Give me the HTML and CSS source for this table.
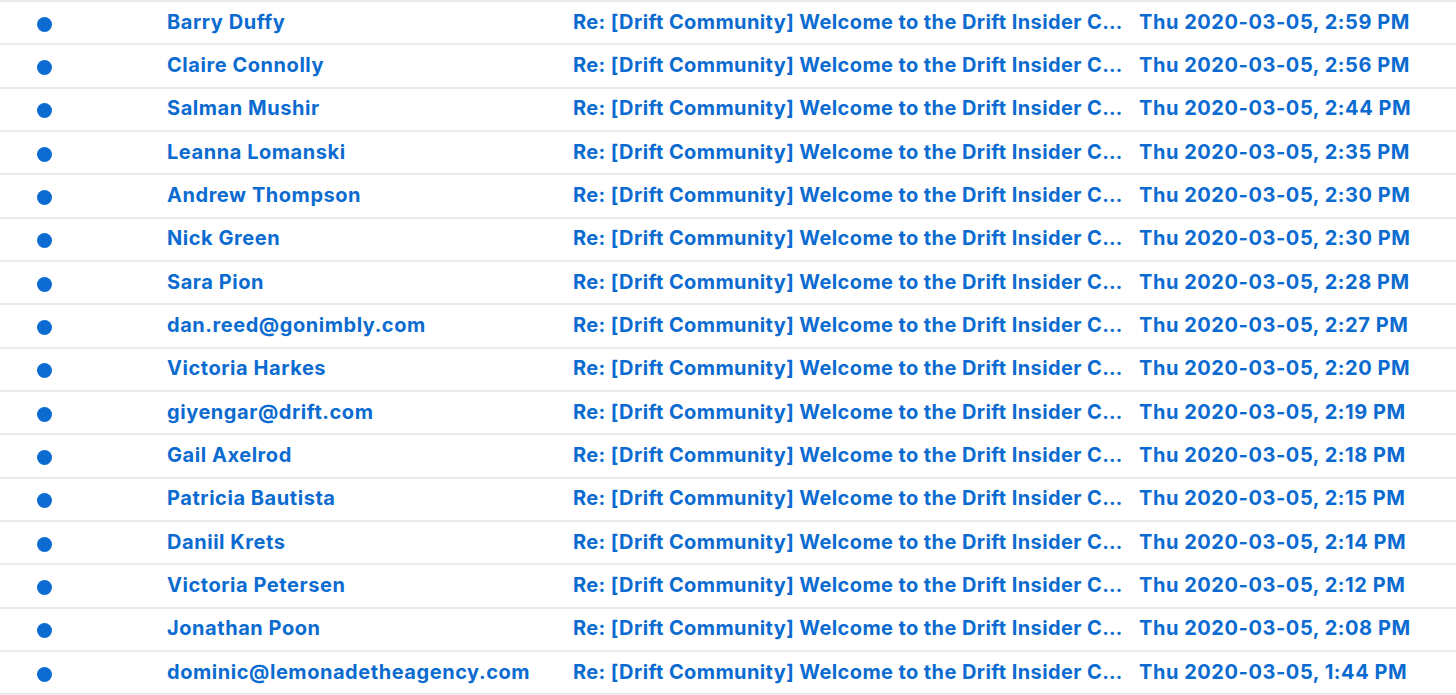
FILE: index.html
```html
<!DOCTYPE html>
<html lang="en">
<head>
  <meta charset="UTF-8" />
  <meta name="viewport" content="width=device-width, initial-scale=1.0" />
  <title>Inbox</title>
  <link rel="stylesheet" href="styles.css">
</head>
<body>
  <div class="mail-list">
    <div class="mail-row"><span class="dot"></span><span class="from">Barry Duffy</span><span class="subject">Re: [Drift Community] Welcome to the Drift Insider Community!</span><span class="date">Thu 2020-03-05, 2:59 PM</span></div>
    <div class="mail-row"><span class="dot"></span><span class="from">Claire Connolly</span><span class="subject">Re: [Drift Community] Welcome to the Drift Insider Community!</span><span class="date">Thu 2020-03-05, 2:56 PM</span></div>
    <div class="mail-row"><span class="dot"></span><span class="from">Salman Mushir</span><span class="subject">Re: [Drift Community] Welcome to the Drift Insider Community!</span><span class="date">Thu 2020-03-05, 2:44 PM</span></div>
    <div class="mail-row"><span class="dot"></span><span class="from">Leanna Lomanski</span><span class="subject">Re: [Drift Community] Welcome to the Drift Insider Community!</span><span class="date">Thu 2020-03-05, 2:35 PM</span></div>
    <div class="mail-row"><span class="dot"></span><span class="from">Andrew Thompson</span><span class="subject">Re: [Drift Community] Welcome to the Drift Insider Community!</span><span class="date">Thu 2020-03-05, 2:30 PM</span></div>
    <div class="mail-row"><span class="dot"></span><span class="from">Nick Green</span><span class="subject">Re: [Drift Community] Welcome to the Drift Insider Community!</span><span class="date">Thu 2020-03-05, 2:30 PM</span></div>
    <div class="mail-row"><span class="dot"></span><span class="from">Sara Pion</span><span class="subject">Re: [Drift Community] Welcome to the Drift Insider Community!</span><span class="date">Thu 2020-03-05, 2:28 PM</span></div>
    <div class="mail-row"><span class="dot"></span><span class="from">dan.reed@gonimbly.com</span><span class="subject">Re: [Drift Community] Welcome to the Drift Insider Community!</span><span class="date">Thu 2020-03-05, 2:27 PM</span></div>
    <div class="mail-row"><span class="dot"></span><span class="from">Victoria Harkes</span><span class="subject">Re: [Drift Community] Welcome to the Drift Insider Community!</span><span class="date">Thu 2020-03-05, 2:20 PM</span></div>
    <div class="mail-row"><span class="dot"></span><span class="from">giyengar@drift.com</span><span class="subject">Re: [Drift Community] Welcome to the Drift Insider Community!</span><span class="date">Thu 2020-03-05, 2:19 PM</span></div>
    <div class="mail-row"><span class="dot"></span><span class="from">Gail Axelrod</span><span class="subject">Re: [Drift Community] Welcome to the Drift Insider Community!</span><span class="date">Thu 2020-03-05, 2:18 PM</span></div>
    <div class="mail-row"><span class="dot"></span><span class="from">Patricia Bautista</span><span class="subject">Re: [Drift Community] Welcome to the Drift Insider Community!</span><span class="date">Thu 2020-03-05, 2:15 PM</span></div>
    <div class="mail-row"><span class="dot"></span><span class="from">Daniil Krets</span><span class="subject">Re: [Drift Community] Welcome to the Drift Insider Community!</span><span class="date">Thu 2020-03-05, 2:14 PM</span></div>
    <div class="mail-row"><span class="dot"></span><span class="from">Victoria Petersen</span><span class="subject">Re: [Drift Community] Welcome to the Drift Insider Community!</span><span class="date">Thu 2020-03-05, 2:12 PM</span></div>
    <div class="mail-row"><span class="dot"></span><span class="from">Jonathan Poon</span><span class="subject">Re: [Drift Community] Welcome to the Drift Insider Community!</span><span class="date">Thu 2020-03-05, 2:08 PM</span></div>
    <div class="mail-row"><span class="dot"></span><span class="from">dominic@lemonadetheagency.com</span><span class="subject">Re: [Drift Community] Welcome to the Drift Insider Community!</span><span class="date">Thu 2020-03-05, 1:44 PM</span></div>
  </div>
</body>
</html>
```

FILE: styles.css
```css
body, html {
  margin: 0;
  padding: 0;
  height: 100%;
  overflow: hidden;
  background: #fff;
  font-family: 'Inter', 'Liberation Sans', Arial, sans-serif;
}

.mail-list {
  border-top: 2px solid #ebebeb;
}

.mail-row {
  display: grid;
  grid-template-columns: 167px 406px 566px 1fr;
  align-items: center;
  height: 41.33px;
  border-bottom: 2px solid #ebebeb;
  color: #0b6bd0;
  font-size: 20px;
  font-weight: 700;
  letter-spacing: 0.55px;
  line-height: 24px;
  white-space: nowrap;
}

.dot {
  width: 15px;
  height: 15px;
  margin-left: 37px;
  margin-top: 3px;
  border-radius: 50%;
  background: #0b6bd0;
}

.from,
.subject {
  overflow: hidden;
  text-overflow: ellipsis;
  padding-bottom: 2px;
  padding-right: 8px;
}

.subject {
  letter-spacing: 0.4px;
}

.date {
  padding-bottom: 2px;
}
```
